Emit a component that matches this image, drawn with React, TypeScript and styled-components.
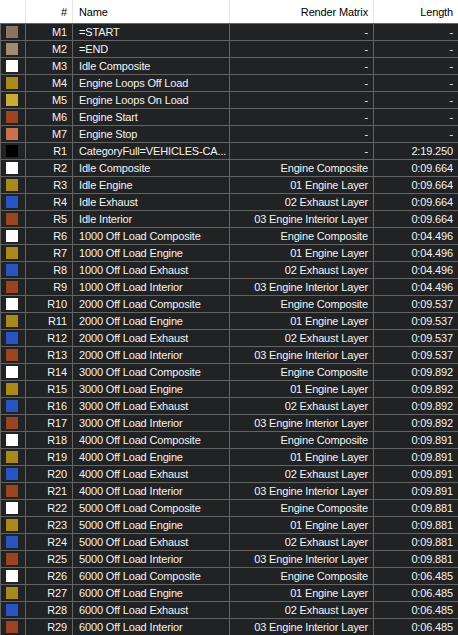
import React from 'react';
import styled, { createGlobalStyle } from 'styled-components';

const GlobalStyle = createGlobalStyle`
  html, body {
    margin: 0;
    padding: 0;
    background: #212223;
  }
`;

interface Row {
  id: string;
  name: string;
  matrix: string;
  length: string;
  color: string;
}

const C = {
  white: '#ffffff',
  gold: '#a8891a',
  blue: '#2a55c0',
  rust: '#9a4421',
  black: '#000000',
};

const layerGroup = (base: number, prefix: string, len: string): Row[] => [
  { id: `R${base}`, name: `${prefix} Off Load Composite`, matrix: 'Engine Composite', length: len, color: C.white },
  { id: `R${base + 1}`, name: `${prefix} Off Load Engine`, matrix: '01 Engine Layer', length: len, color: C.gold },
  { id: `R${base + 2}`, name: `${prefix} Off Load Exhaust`, matrix: '02 Exhaust Layer', length: len, color: C.blue },
  { id: `R${base + 3}`, name: `${prefix} Off Load Interior`, matrix: '03 Engine Interior Layer', length: len, color: C.rust },
];

const rows: Row[] = [
  { id: 'M1', name: '=START', matrix: '-', length: '-', color: '#8a7564' },
  { id: 'M2', name: '=END', matrix: '-', length: '-', color: '#a08a70' },
  { id: 'M3', name: 'Idle Composite', matrix: '-', length: '-', color: C.white },
  { id: 'M4', name: 'Engine Loops Off Load', matrix: '-', length: '-', color: C.gold },
  { id: 'M5', name: 'Engine Loops On Load', matrix: '-', length: '-', color: '#c8ac3a' },
  { id: 'M6', name: 'Engine Start', matrix: '-', length: '-', color: C.rust },
  { id: 'M7', name: 'Engine Stop', matrix: '-', length: '-', color: '#c8704f' },
  { id: 'R1', name: 'CategoryFull=VEHICLES-CA...', matrix: '-', length: '2:19.250', color: C.black },
  { id: 'R2', name: 'Idle Composite', matrix: 'Engine Composite', length: '0:09.664', color: C.white },
  { id: 'R3', name: 'Idle Engine', matrix: '01 Engine Layer', length: '0:09.664', color: C.gold },
  { id: 'R4', name: 'Idle Exhaust', matrix: '02 Exhaust Layer', length: '0:09.664', color: C.blue },
  { id: 'R5', name: 'Idle Interior', matrix: '03 Engine Interior Layer', length: '0:09.664', color: C.rust },
  ...layerGroup(6, '1000', '0:04.496'),
  ...layerGroup(10, '2000', '0:09.537'),
  ...layerGroup(14, '3000', '0:09.892'),
  ...layerGroup(18, '4000', '0:09.891'),
  ...layerGroup(22, '5000', '0:09.881'),
  ...layerGroup(26, '6000', '0:06.485'),
];

export default function App() {
  return (
    <>
      <GlobalStyle />
      <Table>
        <Header>
          <HeadCell />
          <HeadCell $align="right">#</HeadCell>
          <HeadCell>Name</HeadCell>
          <HeadCell $align="right">Render Matrix</HeadCell>
          <HeadCell $align="right">Length</HeadCell>
        </Header>
        <Body>
          {rows.map((r) => (
            <React.Fragment key={r.id}>
              <Cell>
                <Swatch $color={r.color} />
              </Cell>
              <Cell $align="right">{r.id}</Cell>
              <Cell>{r.name}</Cell>
              <Cell $align="right">{r.matrix}</Cell>
              <Cell $align="right">{r.length}</Cell>
            </React.Fragment>
          ))}
        </Body>
      </Table>
    </>
  );
}

const Table = styled.div`
  width: 458px;
  font-family: 'Liberation Sans', Arial, sans-serif;
  font-size: 11px;
  letter-spacing: -0.15px;
`;

const Header = styled.div`
  display: grid;
  grid-template-columns: 25px 46px 156px 143px 1fr;
  column-gap: 1px;
  background: #e5e5e5;
  height: 23px;
`;

const HeadCell = styled.div<{ $align?: 'left' | 'right' }>`
  background: #ffffff;
  color: #000000;
  display: flex;
  align-items: center;
  justify-content: ${(p) => (p.$align === 'right' ? 'flex-end' : 'flex-start')};
  padding: 0 5px 0 6px;
  white-space: nowrap;
`;

const Body = styled.div`
  display: grid;
  grid-template-columns: 24px 46px 156px 143px 1fr;
  grid-auto-rows: 16px;
  gap: 1px;
  padding: 1px 0 0 1px;
  background: #646464;
`;

const Cell = styled.div<{ $align?: 'left' | 'right' }>`
  background: #212223;
  color: #f4f4f4;
  display: flex;
  align-items: center;
  justify-content: ${(p) => (p.$align === 'right' ? 'flex-end' : 'flex-start')};
  padding: 0 5px 0 6px;
  white-space: nowrap;
  overflow: hidden;
  line-height: 16px;
`;

const Swatch = styled.span<{ $color: string }>`
  width: 12px;
  height: 12px;
  margin-left: -1px;
  background: ${(p) => p.$color};
`;
